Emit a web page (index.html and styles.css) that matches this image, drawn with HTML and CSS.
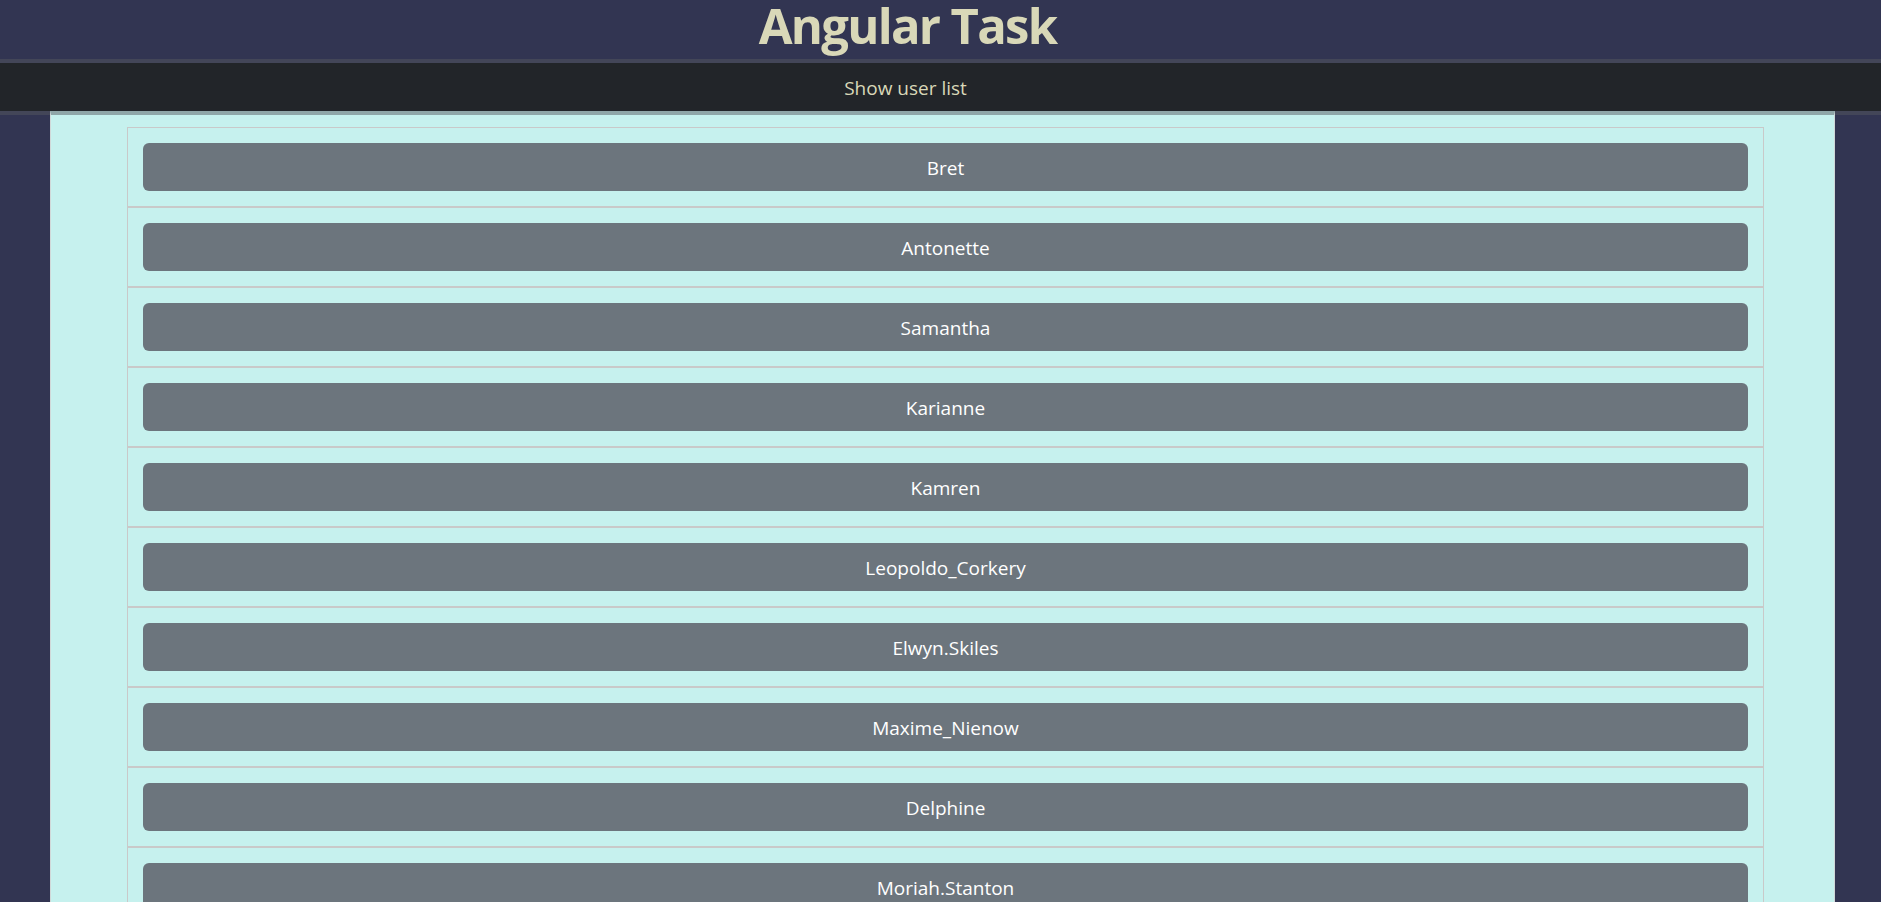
FILE: index.html
```html
<!DOCTYPE html>
<html lang="en">
<head>
<meta charset="utf-8">
<title>Angular Task</title>
<link rel="stylesheet" href="styles.css">
</head>
<body>
<header class="header">
  <h1 class="title">Angular Task</h1>
</header>
<nav class="nav">
  <span class="nav-link">Show user list</span>
</nav>
<main class="main">
  <section class="panel">
    <ul class="user-list">
      <li class="user-item"><button class="user-btn">Bret</button></li>
      <li class="user-item"><button class="user-btn">Antonette</button></li>
      <li class="user-item"><button class="user-btn">Samantha</button></li>
      <li class="user-item"><button class="user-btn">Karianne</button></li>
      <li class="user-item"><button class="user-btn">Kamren</button></li>
      <li class="user-item"><button class="user-btn">Leopoldo_Corkery</button></li>
      <li class="user-item"><button class="user-btn">Elwyn.Skiles</button></li>
      <li class="user-item"><button class="user-btn">Maxime_Nienow</button></li>
      <li class="user-item"><button class="user-btn">Delphine</button></li>
      <li class="user-item"><button class="user-btn">Moriah.Stanton</button></li>
    </ul>
  </section>
</main>
</body>
</html>
```
FILE: styles.css
```css
* { box-sizing: border-box; }
html, body { margin: 0; padding: 0; }
body {
  background: #323552;
  font-family: "Open Sans", "Noto Sans", sans-serif;
  overflow: hidden;
  height: 902px;
}
.header {
  height: 63px;
  border-bottom: 4px solid rgba(85, 88, 95, 0.49);
  display: flex;
  justify-content: center;
  padding-right: 66px;
}
.title {
  margin: 0;
  font-size: 49px;
  line-height: 50px;
  font-weight: 700;
  color: #d9d8b8;
  letter-spacing: -1.7px;
}
.nav {
  height: 48px;
  background: #222529;
  display: flex;
  align-items: center;
  justify-content: center;
  padding-right: 70px;
  padding-top: 1px;
}
.nav-link {
  color: #d9d8b8;
  font-size: 19px;
}
.main {
  border-top: 4px solid rgba(85, 88, 95, 0.49);
}
.panel {
  margin: -4px 46px 0 50px;
  border-top: 4px solid rgba(85, 88, 95, 0.49);
  border-left: 1px solid #d0d8d8;
  border-right: 1px solid #d0d8d8;
  background: #c6f1ee;
  padding: 12px 70px 0 76px;
  height: 900px;
}
.user-list {
  list-style: none;
  margin: 0;
  padding: 0;
}
.user-item {
  border: 1px solid #c9c9c9;
  padding: 15px;
}
.user-btn {
  display: block;
  width: 100%;
  height: 48px;
  border: none;
  border-radius: 6px;
  background: #6c757d;
  color: #ffffff;
  font-family: "Open Sans", "Noto Sans", sans-serif;
  font-size: 19px;
  padding: 1px 16px 0;
}
```
